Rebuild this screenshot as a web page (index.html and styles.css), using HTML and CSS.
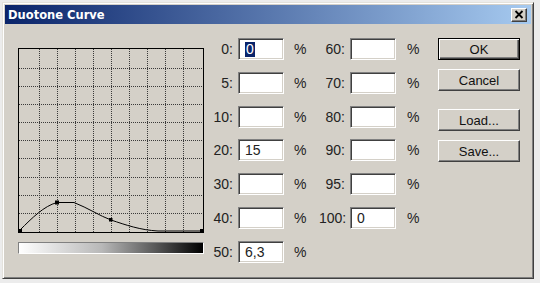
FILE: index.html
```html
<!DOCTYPE html>
<html lang="en">
<head>
  <meta charset="UTF-8">
  <title>Duotone Curve</title>
  <link rel="stylesheet" href="styles.css">
</head>
<body>

  <div class="window">
    <div class="titlebar">
      <span class="title">Duotone Curve</span>
      <span class="close">
        <svg width="10" height="9" viewBox="0 0 10 9">
          <path d="M1.5 1 L8.5 8 M8.5 1 L1.5 8" stroke="#000" stroke-width="1.8" fill="none"/>
        </svg>
      </span>
    </div>

    <div class="dialog-body">
      <div class="curve-col">
        <svg class="graph" width="186" height="185" viewBox="0 0 186 185">
          <rect x="0.5" y="0.5" width="185" height="184" fill="none" stroke="#000"/>
          <g stroke="#3a3a3a" stroke-width="1" stroke-dasharray="1 1">
            <path d="M21.5 1 V184 M39.5 1 V184 M57.5 1 V184 M75.5 1 V184 M93.5 1 V184 M111.5 1 V184 M129.5 1 V184 M147.5 1 V184 M165.5 1 V184"/>
            <path d="M1 20.5 H185 M1 38.5 H185 M1 56.5 H185 M1 74.5 H185 M1 92.5 H185 M1 110.5 H185 M1 129.5 H185 M1 147.5 H185 M1 165.5 H185"/>
          </g>
          <path d="M2 182 C 14 170 26 158 39 154.5 L 56 154.5 C 70 160 82 168 93 172 C 108 177 122 182 140 183 L 184 183" fill="none" stroke="#000" stroke-width="1"/>
          <g fill="#000">
            <rect x="0" y="181" width="4" height="4"/>
            <rect x="37" y="152.5" width="4" height="4"/>
            <rect x="91" y="170" width="3.5" height="3.5"/>
            <rect x="182" y="181" width="4" height="4"/>
          </g>
        </svg>
        <div class="ramp"></div>
      </div>

      <div class="fields">
        <label>0:</label><span class="box"><span class="sel">0</span></span><span class="pct">%</span>
        <label>60:</label><span class="box"></span><span class="pct">%</span>

        <label>5:</label><span class="box"></span><span class="pct">%</span>
        <label>70:</label><span class="box"></span><span class="pct">%</span>

        <label>10:</label><span class="box"></span><span class="pct">%</span>
        <label>80:</label><span class="box"></span><span class="pct">%</span>

        <label>20:</label><span class="box">15</span><span class="pct">%</span>
        <label>90:</label><span class="box"></span><span class="pct">%</span>

        <label>30:</label><span class="box"></span><span class="pct">%</span>
        <label>95:</label><span class="box"></span><span class="pct">%</span>

        <label>40:</label><span class="box"></span><span class="pct">%</span>
        <label>100:</label><span class="box">0</span><span class="pct">%</span>

        <label>50:</label><span class="box">6,3</span><span class="pct">%</span>
      </div>

      <div class="buttons">
        <button class="btn default">OK</button>
        <button class="btn">Cancel</button>
        <button class="btn gap">Load...</button>
        <button class="btn">Save...</button>
      </div>
    </div>
  </div>

</body>
</html>
```

FILE: styles.css
```css
body {
  margin: 0;
  background: #ececec;
  font-family: "Liberation Sans", Arial, sans-serif;
}
.window {
  margin: 2px 0 0 2px;
  width: 532px;
  height: 277px;
  box-sizing: border-box;
  background: #d4d0c8;
  border: 1px solid;
  border-color: #e4e2dc #404040 #404040 #e4e2dc;
  box-shadow: inset 1px 1px 0 #fff, inset -1px -1px 0 #808080;
  padding: 2px;
}
.titlebar {
  display: flex;
  align-items: center;
  height: 19px;
  padding-left: 3px;
  background: linear-gradient(to right, #0a246a, #a6caf0);
}
.title {
  color: #fff;
  font-family: "DejaVu Sans", Verdana, sans-serif;
  font-weight: bold;
  font-size: 11.5px;
}
.close {
  margin-left: auto;
  margin-right: 4px;
  width: 16px;
  height: 14px;
  box-sizing: border-box;
  background: #d4d0c8;
  border: 1px solid;
  border-color: #fff #404040 #404040 #fff;
  box-shadow: inset -1px -1px 0 #808080;
  display: flex;
  align-items: center;
  justify-content: center;
}
.dialog-body {
  display: flex;
  padding: 14px 0 0 13px;
}
.curve-col {
  width: 186px;
  margin: 10px 4px 0 0;
}
.graph {
  display: block;
}
.ramp {
  margin-top: 9px;
  height: 12px;
  box-sizing: border-box;
  border: 1px solid;
  border-color: #808080 #fff #fff #808080;
  background: linear-gradient(to right, #fff, #b8b8b8 45%, #555 75%, #000);
}
.fields {
  display: grid;
  grid-template-columns: 25px 51px 35px 26px 51px 42px;
  grid-auto-rows: 22px;
  row-gap: 11.8px;
  align-items: center;
  font-size: 14px;
  color: #222;
}
.fields label {
  text-align: right;
}
.box {
  margin-left: 5px;
  height: 22px;
  box-sizing: border-box;
  background: #fff;
  border: 1px solid;
  border-color: #808080 #fff #fff #808080;
  box-shadow: inset 1px 1px 0 #404040, inset -1px -1px 0 #d4d0c8;
  padding: 3px 0 0 6px;
  line-height: 15px;
}
.sel {
  display: inline-block;
  background: #0a246a;
  color: #fff;
  padding: 0 1px;
}
.pct {
  padding-left: 10px;
}
.fields .pct:nth-child(6n) {
  padding-left: 11px;
}
.buttons {
  display: flex;
  flex-direction: column;
  width: 82px;
}
.btn {
  height: 22px;
  margin-bottom: 9px;
  padding: 0;
  font-family: "Liberation Sans", Arial, sans-serif;
  font-size: 13px;
  color: #111;
  background: #d4d0c8;
  border: 1px solid;
  border-color: #fff #404040 #404040 #fff;
  box-shadow: inset -1px -1px 0 #808080;
}
.btn.default {
  border: 1px solid #000;
  box-shadow: inset 1px 1px 0 #fff, inset -1px -1px 0 #404040, inset -2px -2px 0 #808080;
}
.btn.gap {
  margin-top: 9px;
}
```
